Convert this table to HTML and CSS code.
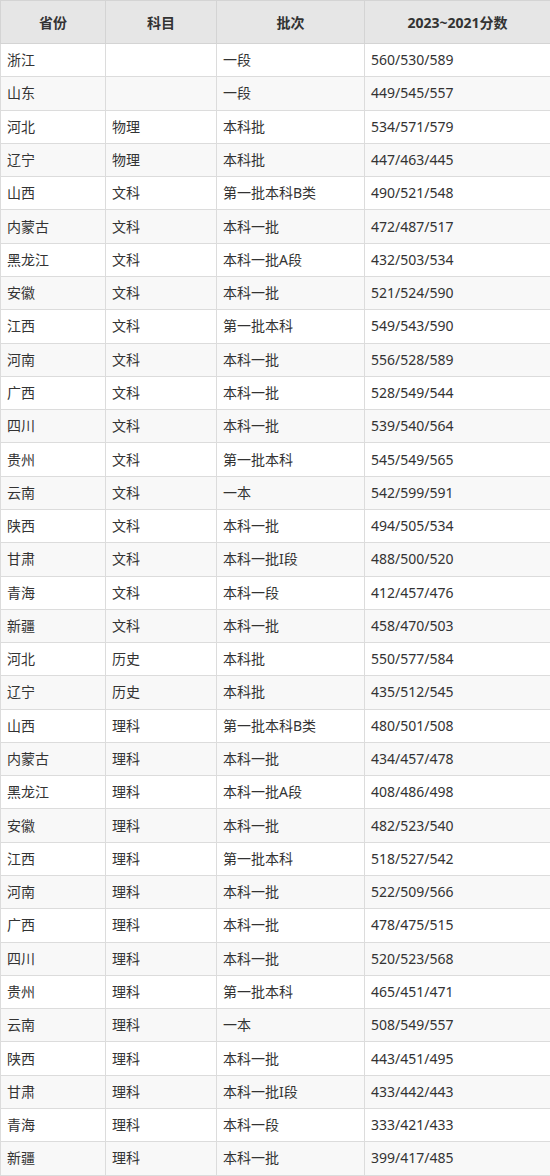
FILE: index.html
```html
<!DOCTYPE html>
<html lang="zh-CN">
<head>
<meta charset="utf-8">
<title>分数线</title>
<link rel="stylesheet" href="styles.css">
</head>
<body>
<table class="score-table">
  <colgroup>
    <col class="c1"><col class="c2"><col class="c3"><col class="c4">
  </colgroup>
  <thead>
    <tr><th>省份</th><th>科目</th><th>批次</th><th>2023~2021分数</th></tr>
  </thead>
  <tbody>
    <tr><td>浙江</td><td></td><td>一段</td><td>560/530/589</td></tr>
    <tr><td>山东</td><td></td><td>一段</td><td>449/545/557</td></tr>
    <tr><td>河北</td><td>物理</td><td>本科批</td><td>534/571/579</td></tr>
    <tr><td>辽宁</td><td>物理</td><td>本科批</td><td>447/463/445</td></tr>
    <tr><td>山西</td><td>文科</td><td>第一批本科B类</td><td>490/521/548</td></tr>
    <tr><td>内蒙古</td><td>文科</td><td>本科一批</td><td>472/487/517</td></tr>
    <tr><td>黑龙江</td><td>文科</td><td>本科一批A段</td><td>432/503/534</td></tr>
    <tr><td>安徽</td><td>文科</td><td>本科一批</td><td>521/524/590</td></tr>
    <tr><td>江西</td><td>文科</td><td>第一批本科</td><td>549/543/590</td></tr>
    <tr><td>河南</td><td>文科</td><td>本科一批</td><td>556/528/589</td></tr>
    <tr><td>广西</td><td>文科</td><td>本科一批</td><td>528/549/544</td></tr>
    <tr><td>四川</td><td>文科</td><td>本科一批</td><td>539/540/564</td></tr>
    <tr><td>贵州</td><td>文科</td><td>第一批本科</td><td>545/549/565</td></tr>
    <tr><td>云南</td><td>文科</td><td>一本</td><td>542/599/591</td></tr>
    <tr><td>陕西</td><td>文科</td><td>本科一批</td><td>494/505/534</td></tr>
    <tr><td>甘肃</td><td>文科</td><td>本科一批I段</td><td>488/500/520</td></tr>
    <tr><td>青海</td><td>文科</td><td>本科一段</td><td>412/457/476</td></tr>
    <tr><td>新疆</td><td>文科</td><td>本科一批</td><td>458/470/503</td></tr>
    <tr><td>河北</td><td>历史</td><td>本科批</td><td>550/577/584</td></tr>
    <tr><td>辽宁</td><td>历史</td><td>本科批</td><td>435/512/545</td></tr>
    <tr><td>山西</td><td>理科</td><td>第一批本科B类</td><td>480/501/508</td></tr>
    <tr><td>内蒙古</td><td>理科</td><td>本科一批</td><td>434/457/478</td></tr>
    <tr><td>黑龙江</td><td>理科</td><td>本科一批A段</td><td>408/486/498</td></tr>
    <tr><td>安徽</td><td>理科</td><td>本科一批</td><td>482/523/540</td></tr>
    <tr><td>江西</td><td>理科</td><td>第一批本科</td><td>518/527/542</td></tr>
    <tr><td>河南</td><td>理科</td><td>本科一批</td><td>522/509/566</td></tr>
    <tr><td>广西</td><td>理科</td><td>本科一批</td><td>478/475/515</td></tr>
    <tr><td>四川</td><td>理科</td><td>本科一批</td><td>520/523/568</td></tr>
    <tr><td>贵州</td><td>理科</td><td>第一批本科</td><td>465/451/471</td></tr>
    <tr><td>云南</td><td>理科</td><td>一本</td><td>508/549/557</td></tr>
    <tr><td>陕西</td><td>理科</td><td>本科一批</td><td>443/451/495</td></tr>
    <tr><td>甘肃</td><td>理科</td><td>本科一批I段</td><td>433/442/443</td></tr>
    <tr><td>青海</td><td>理科</td><td>本科一段</td><td>333/421/433</td></tr>
    <tr><td>新疆</td><td>理科</td><td>本科一批</td><td>399/417/485</td></tr>
  </tbody>
</table>
</body>
</html>
```

FILE: styles.css
```css
html, body {
  margin: 0;
  padding: 0;
  background: #ffffff;
}

body {
  font-family: "Noto Sans", "Noto Sans CJK SC", sans-serif;
  font-size: 14px;
  color: #333333;
}

.score-table {
  width: 550px;
  border-collapse: collapse;
  table-layout: fixed;
  border: 1px solid #d9d9d9;
}

.score-table .c1 { width: 105px; }
.score-table .c2 { width: 111px; }
.score-table .c3 { width: 148px; }
.score-table .c4 { width: 186px; }

.score-table th,
.score-table td {
  border: 1px solid #dcdcdc;
  padding: 0 6px;
  white-space: nowrap;
  overflow: hidden;
}

.score-table thead tr {
  height: 43px;
}

.score-table th {
  background: #e6e6e6;
  font-weight: bold;
  text-align: center;
  color: #333333;
  border-color: #d4d4d4;
}

.score-table tbody tr {
  height: 33.29px;
}

.score-table td {
  text-align: left;
  line-height: 20px;
}

.score-table tbody tr:nth-child(even) td {
  background: #f8f8f8;
}
```
